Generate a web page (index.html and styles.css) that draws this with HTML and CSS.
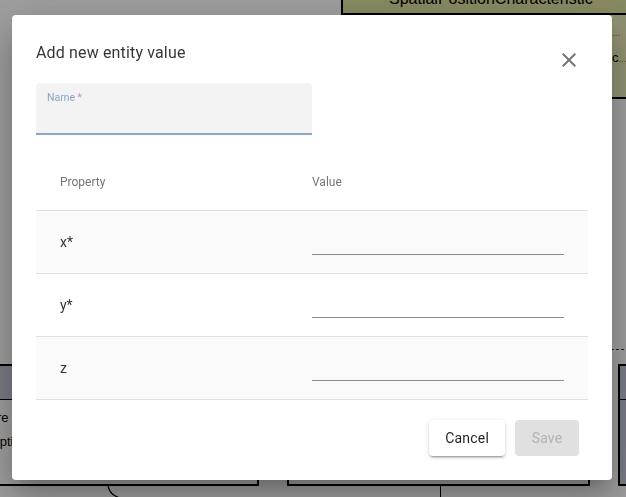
FILE: index.html
```html
<!DOCTYPE html>
<html lang="en">
<head>
<meta charset="utf-8">
<title>Add new entity value</title>
<link rel="stylesheet" href="styles.css">
</head>
<body>
<div class="canvas">
  <div class="node node-top">
    <div class="node-title">SpatialPositionCharacteristic</div>
    <div class="node-body">
      <div class="attr"><span class="dots">...</span></div>
      <div class="attr">c<span class="dots">.....</span></div>
    </div>
  </div>
  <div class="node node-left">
    <div class="node-head"></div>
    <div class="node-rows">
      <div class="attr-row attr-shift">structure</div>
      <div class="attr-row">description</div>
    </div>
  </div>
  <div class="node node-mid">
    <div class="node-head"></div>
  </div>
  <div class="node node-right">
    <div class="node-head"></div>
  </div>
  <div class="edge-dash"></div>
  <div class="edge-vert"></div>
  <svg class="edge-curve" width="30" height="20" viewBox="0 0 30 20">
    <path d="M2 0 Q4 9 14 12" fill="none" stroke="#000" stroke-width="1.2"/>
  </svg>
</div>

<div class="backdrop">
  <div class="dialog" role="dialog">
    <div class="dialog-header">
      <h2 class="dialog-title">Add new entity value</h2>
      <button class="close-btn" aria-label="close">
        <svg width="24" height="24" viewBox="0 0 24 24"><path fill="currentColor" d="M19 6.41 17.59 5 12 10.59 6.41 5 5 6.41 10.59 12 5 17.59 6.41 19 12 13.41 17.59 19 19 17.59 13.41 12z"/></svg>
      </button>
    </div>

    <div class="field">
      <div class="field-label">Name<span class="req">&thinsp;*</span></div>
    </div>

    <div class="table">
      <div class="thead">
        <div class="th th-prop">Property</div>
        <div class="th">Value</div>
      </div>
      <div class="row alt">
        <div class="cell-prop">x*</div>
        <div class="cell-value"><input class="value-input" type="text"></div>
      </div>
      <div class="row">
        <div class="cell-prop">y*</div>
        <div class="cell-value"><input class="value-input" type="text"></div>
      </div>
      <div class="row alt">
        <div class="cell-prop">z</div>
        <div class="cell-value"><input class="value-input" type="text"></div>
      </div>
    </div>

    <div class="actions">
      <button class="btn btn-cancel">Cancel</button>
      <button class="btn btn-save" disabled>Save</button>
    </div>
  </div>
</div>
</body>
</html>
```

FILE: styles.css
```css
html, body {
  margin: 0;
  padding: 0;
  background: #fff;
}

.canvas {
  position: relative;
  width: 626px;
  height: 497px;
  overflow: hidden;
  background: #fff;
  font-family: "Liberation Sans", Arial, sans-serif;
}

.node {
  position: absolute;
  box-sizing: border-box;
  border: 2px solid #000;
}

.node-top {
  left: 341px;
  top: -22px;
  width: 320px;
  height: 121px;
  background: #eaecb8;
}

.node-title {
  height: 35px;
  box-sizing: border-box;
  padding: 10px 0 0 46px;
  font-size: 16px;
  line-height: 18px;
  color: #000;
  background: #dcdf9e;
  border-bottom: 2px solid #000;
  white-space: nowrap;
}

.node-body {
  padding: 4px 0 0 269px;
}

.attr {
  font-size: 13px;
  line-height: 25px;
  color: #000;
  white-space: nowrap;
}

.dots {
  color: #b5651d;
  font-size: 10px;
}

.node-left {
  left: -41px;
  top: 364px;
  width: 300px;
  height: 122px;
  background: #fff;
}

.node-head {
  height: 34px;
  box-sizing: border-box;
  background: #c5c9d8;
  border-bottom: 1px solid #000;
}

.node-rows {
  padding: 6px 0 0 4px;
}

.attr-row {
  font-size: 13px;
  line-height: 24px;
  color: #000;
  white-space: nowrap;
}

.attr-shift {
  text-indent: -7px;
}

.node-mid {
  left: 287px;
  top: 364px;
  width: 303px;
  height: 122px;
  background: #fff;
}

.node-right {
  left: 618px;
  top: 364px;
  width: 100px;
  height: 122px;
  background: #c5c9d8;
}

.edge-dash {
  position: absolute;
  left: 600px;
  top: 349px;
  width: 40px;
  border-top: 1px dashed #222;
}

.edge-vert {
  position: absolute;
  left: 440px;
  top: 486px;
  width: 1px;
  height: 12px;
  background: #000;
}

.edge-curve {
  position: absolute;
  left: 106px;
  top: 486px;
}

.backdrop {
  position: fixed;
  inset: 0;
  display: flex;
  align-items: center;
  justify-content: center;
  padding: 0 2px 2px 0;
  background: rgba(0, 0, 0, 0.38);
}

.dialog {
  width: 600px;
  box-sizing: border-box;
  padding: 26px 24px 24px;
  background: #fff;
  border-radius: 4px;
  box-shadow: 0 11px 15px -7px rgba(0,0,0,0.2), 0 24px 38px 3px rgba(0,0,0,0.14), 0 9px 46px 8px rgba(0,0,0,0.12);
  font-family: Roboto, "Liberation Sans", sans-serif;
}

.dialog-header {
  display: flex;
  justify-content: space-between;
  align-items: flex-start;
  height: 24px;
}

.dialog-title {
  margin: 0;
  font-size: 16px;
  line-height: 24px;
  font-weight: 400;
  letter-spacing: 0.15px;
  color: rgba(0, 0, 0, 0.8);
}

.close-btn {
  width: 24px;
  height: 24px;
  margin: 7px 7px 0 0;
  padding: 0;
  border: 0;
  background: none;
  color: #757575;
  cursor: pointer;
}

.close-btn svg {
  display: block;
}

.field {
  margin-top: 18px;
  width: 276px;
  height: 52px;
  box-sizing: border-box;
  padding: 8px 12px 0 11px;
  background: #f3f3f3;
  border-radius: 4px 4px 0 0;
  border-bottom: 2px solid #8ea6c2;
}

.field-label {
  font-size: 10.5px;
  line-height: 13px;
  color: #8da3c0;
}

.req {
  color: #c68ad2;
}

.table {
  margin-top: 19px;
}

.thead {
  display: grid;
  grid-template-columns: 276px 276px;
  align-items: center;
  height: 57px;
  box-sizing: border-box;
  border-bottom: 1px solid #e0e0e0;
  font-size: 12px;
  color: #757575;
}

.th-prop {
  padding-left: 24px;
}

.row {
  display: grid;
  grid-template-columns: 276px 276px;
  height: 63px;
  box-sizing: border-box;
  border-bottom: 1px solid #e0e0e0;
  background: #fff;
}

.row.alt {
  background: #fafafa;
}

.cell-prop {
  display: flex;
  align-items: center;
  padding-left: 24px;
  font-size: 14px;
  color: #333;
}

.cell-value {
  display: flex;
  align-items: flex-end;
  padding: 0 24px 18px 0;
}

.value-input {
  width: 252px;
  height: 30px;
  box-sizing: border-box;
  margin: 0;
  padding: 0;
  border: 0;
  border-bottom: 1px solid #8c8c8c;
  background: transparent;
  font-family: Roboto, "Liberation Sans", sans-serif;
  font-size: 14px;
  outline: none;
}

.actions {
  display: flex;
  justify-content: flex-end;
  gap: 10px;
  margin-top: 20px;
  padding-right: 9px;
}

.btn {
  height: 36px;
  min-width: 64px;
  padding: 0 16px;
  border: 0;
  border-radius: 4px;
  font-family: Roboto, "Liberation Sans", sans-serif;
  font-size: 14px;
  letter-spacing: 0.2px;
}

.btn-cancel {
  background: #fff;
  color: rgba(0, 0, 0, 0.87);
  box-shadow: 0 3px 1px -2px rgba(0,0,0,0.2), 0 2px 2px 0 rgba(0,0,0,0.14), 0 1px 5px 0 rgba(0,0,0,0.12);
}

.btn-save {
  background: #e0e0e0;
  color: #b3b3b3;
}
```
